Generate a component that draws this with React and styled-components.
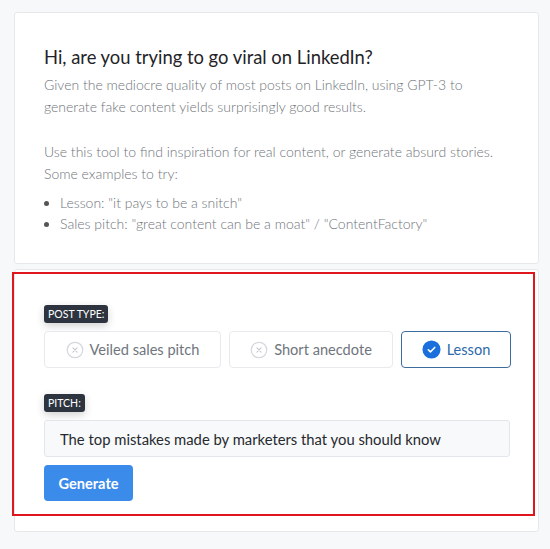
import React from 'react';
import styled, { createGlobalStyle } from 'styled-components';

const GlobalStyle = createGlobalStyle`
  html, body {
    margin: 0;
    padding: 0;
    background: #f7f8fa;
  }
  body {
    font-family: Lato, "Noto Sans", sans-serif;
  }
  * {
    box-sizing: border-box;
  }
`;

const Page = styled.div`
  width: 550px;
  min-height: 549px;
  padding: 12px 11px 18px 14px;
  display: flex;
  flex-direction: column;
  gap: 5px;
`;

const Card = styled.section`
  position: relative;
  background: #ffffff;
  border: 1px solid #e6e8eb;
  border-radius: 3px;
  padding: ${(p) => p.$padding};
`;

const Heading = styled.h2`
  margin: 0 0 4px;
  font-size: 18.4px;
  font-weight: 400;
  color: #1f2328;
  line-height: 26px;
`;

const Text = styled.p`
  margin: 0 0 23px;
  font-size: 14px;
  font-weight: 300;
  line-height: 22px;
  color: #6f747b;

  &:last-of-type {
    margin-bottom: 7px;
  }
`;

const List = styled.ul`
  margin: 0;
  padding-left: 16px;
  font-size: 14px;
  font-weight: 300;
  line-height: 21px;
  color: #6f747b;

  li::marker {
    color: #555;
  }
`;

const Highlight = styled.div`
  position: absolute;
  left: -3px;
  top: 2px;
  right: 3px;
  bottom: 15px;
  border: 2px solid #e0161f;
  pointer-events: none;
`;

const Badge = styled.span`
  display: inline-block;
  align-self: flex-start;
  background: #2d3440;
  color: #ffffff;
  font-size: 10.5px;
  line-height: 18px;
  height: 18px;
  padding: 0 4px;
  border-radius: 3px;
  text-transform: uppercase;
  box-shadow: 0 3px 8px rgba(0, 0, 0, 0.18);
`;

const Field = styled.div`
  display: flex;
  flex-direction: column;
  gap: 8px;
  margin-bottom: ${(p) => p.$gap || 0}px;
`;

const Options = styled.div`
  display: flex;
  gap: 8px;
`;

const Option = styled.button`
  flex: 0 0 ${(p) => p.$width}px;
  height: 37px;
  display: flex;
  align-items: center;
  justify-content: center;
  gap: 6px;
  padding: 0;
  white-space: nowrap;
  background: #ffffff;
  border: 1px solid ${(p) => (p.$active ? '#3d6c9e' : '#e8eaed')};
  border-radius: 4px;
  font-family: inherit;
  font-size: 14.6px;
  color: ${(p) => (p.$active ? '#2c6aa8' : '#6f757d')};
  cursor: pointer;
`;

const Input = styled.input`
  height: 37px;
  width: 466px;
  padding: 0 15px;
  background: #f8f9fb;
  border: 1px solid #e3e6ea;
  border-radius: 3px;
  font-family: inherit;
  font-size: 14.8px;
  color: #26292e;
  outline: none;
`;

const Generate = styled.button`
  align-self: flex-start;
  height: 36px;
  width: 89px;
  padding: 0;
  background: #3a8bea;
  border: none;
  border-radius: 4px;
  color: #ffffff;
  font-family: inherit;
  font-size: 14.6px;
  font-weight: 700;
  cursor: pointer;
`;

const XCircle = () => (
  <svg width="18" height="18" viewBox="0 0 20 20" fill="none">
    <circle cx="10" cy="10" r="8.6" stroke="#d5d8dc" strokeWidth="1.4" />
    <path d="M7.7 7.7l4.6 4.6M12.3 7.7l-4.6 4.6" stroke="#c3c7cc" strokeWidth="1.2" strokeLinecap="round" />
  </svg>
);

const CheckCircle = () => (
  <svg width="19" height="19" viewBox="0 0 20 20">
    <circle cx="10" cy="10" r="9.5" fill="#1a6fdc" />
    <path d="M6.6 10.2l2.3 2.3 4.5-4.7" fill="none" stroke="#ffffff" strokeWidth="1.6" strokeLinecap="round" strokeLinejoin="round" />
  </svg>
);

const postTypes = [
  { label: 'Veiled sales pitch', width: 177 },
  { label: 'Short anecdote', width: 164 },
  { label: 'Lesson', width: 110, active: true },
];

export default function App() {
  return (
    <>
      <GlobalStyle />
      <Page>
        <Card $padding="31px 28px 29px 29px">
          <Heading>Hi, are you trying to go viral on LinkedIn?</Heading>
          <Text>
            Given the mediocre quality of most posts on LinkedIn, using GPT-3 to
            generate fake content yields surprisingly good results.
          </Text>
          <Text>
            Use this tool to find inspiration for real content, or generate absurd
            stories. Some examples to try:
          </Text>
          <List>
            <li>Lesson: "it pays to be a snitch"</li>
            <li>Sales pitch: "great content can be a moat" / "ContentFactory"</li>
          </List>
        </Card>
        <Card $padding="35px 28px 30px 29px">
          <Field $gap={26}>
            <Badge>Post type:</Badge>
            <Options>
              {postTypes.map((t) => (
                <Option key={t.label} $active={t.active} $width={t.width}>
                  {t.active ? <CheckCircle /> : <XCircle />}
                  {t.label}
                </Option>
              ))}
            </Options>
          </Field>
          <Field>
            <Badge>Pitch:</Badge>
            <Input defaultValue="The top mistakes made by marketers that you should know" />
            <Generate>Generate</Generate>
          </Field>
          <Highlight />
        </Card>
      </Page>
    </>
  );
}
